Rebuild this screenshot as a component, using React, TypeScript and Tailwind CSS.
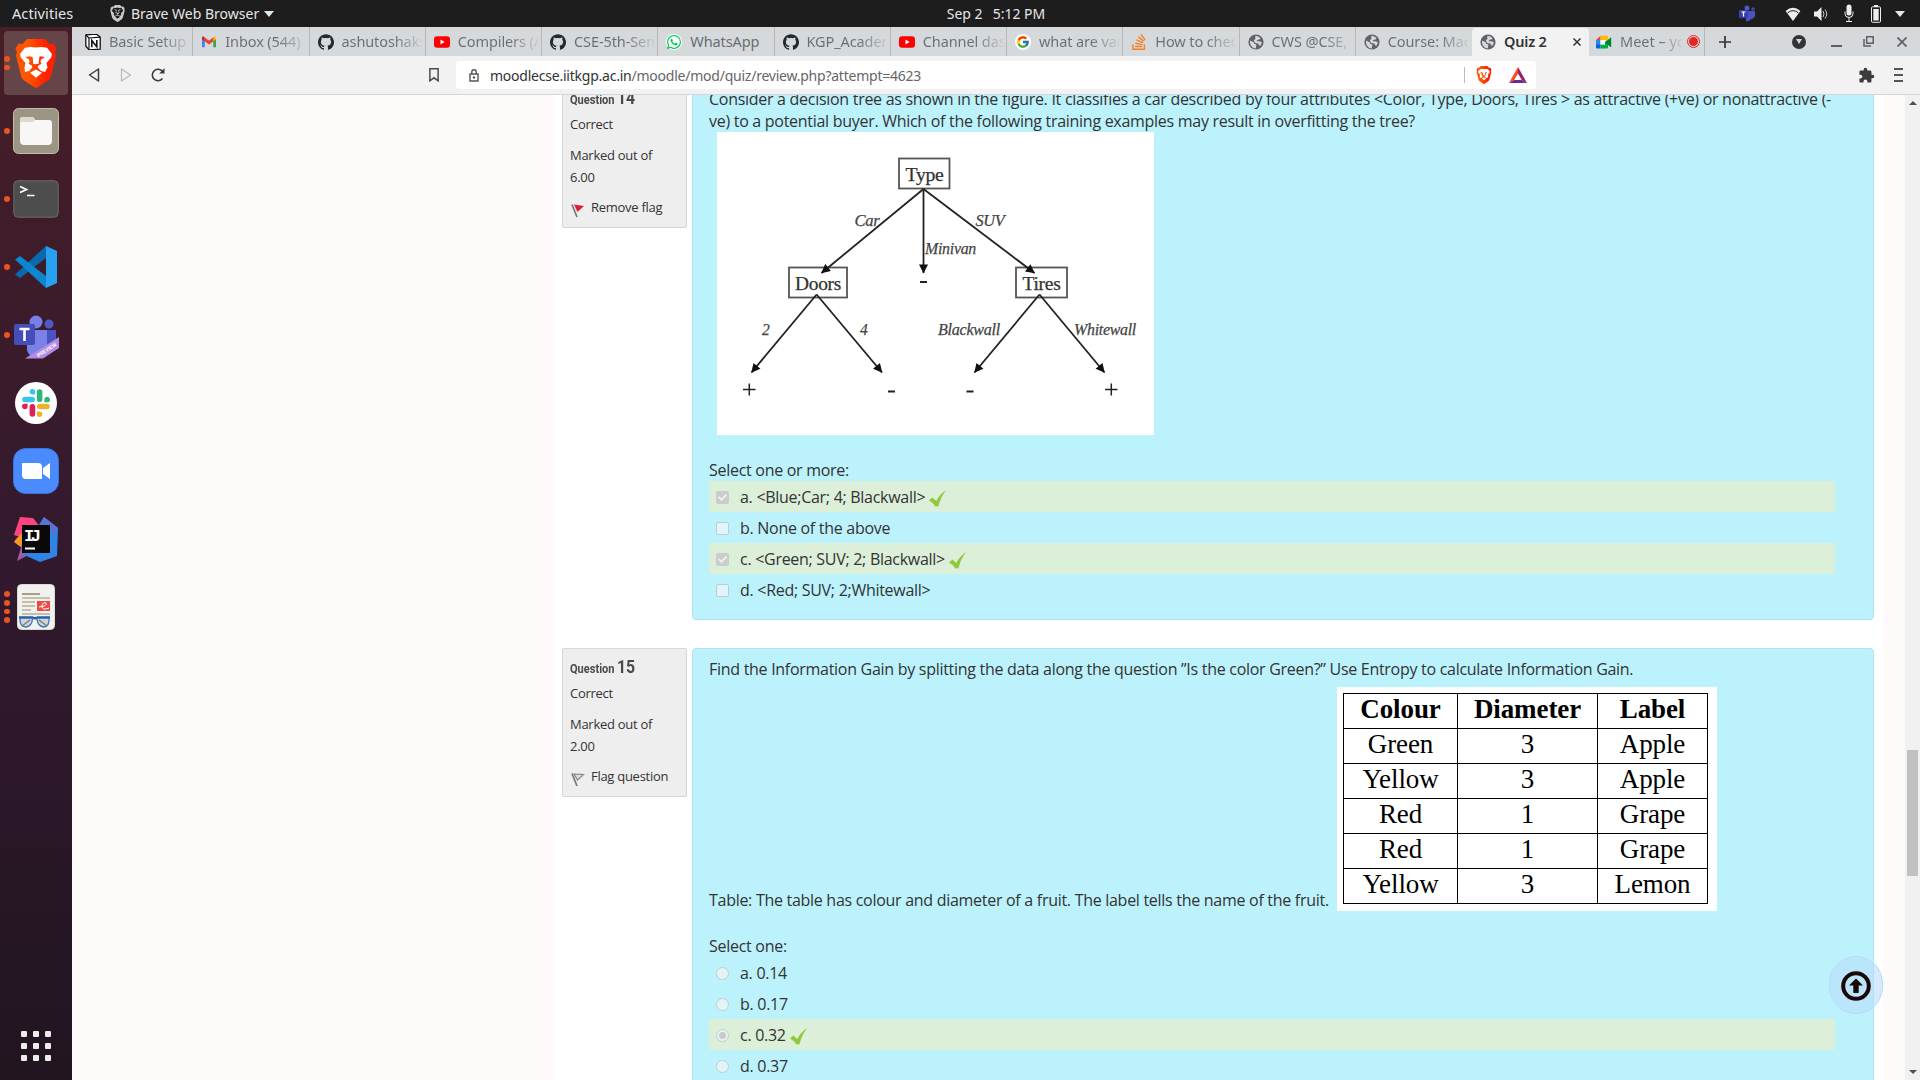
import React from "react";
import { SiBrave, SiGithub, SiWhatsapp, SiStackoverflow } from "react-icons/si";
import { FcGoogle } from "react-icons/fc";
import { FaCheck } from "react-icons/fa";
import { MdExtension } from "react-icons/md";

const ui = "font-['Noto_Sans',sans-serif]";

function NotionIcon() {
  return (
    <svg viewBox="0 0 16 16" className="size-4">
      <path d="M.8.8 11.5.2 15.2 3v12.2L4 15.8.8 12z" fill="#fff" stroke="#111" strokeWidth="1.3" strokeLinejoin="round" />
      <path d="M1 1l3 3v11.5M4 4l11-.8" stroke="#111" strokeWidth="1.2" fill="none" />
      <path d="M6.800 13.200V6.600l5 6.200V6" stroke="#111" strokeWidth="1.600" fill="none" />
    </svg>
  );
}

function GmailIcon() {
  return (
    <svg viewBox="0 0 16 16" className="size-4">
      <path d="M1 4v9.2h2.8V7z" fill="#4285f4" />
      <path d="M12.2 7v6.2H15V4z" fill="#34a853" />
      <path d="M12.2 4v3.4L15 5.2V3.6c0-1-1.2-1.6-2-.9z" fill="#fbbc04" />
      <path d="M1 3.6v1.6l2.8 2.2V4L3 2.7c-.8-.7-2-.1-2 .9z" fill="#c5221f" />
      <path d="M3.5 3.2 8 6.6l4.5-3.4v4L8 10.6 3.5 7.2z" fill="#ea4335" />
    </svg>
  );
}

function YoutubeIcon() {
  return (
    <svg viewBox="0 0 16 16" className="size-4">
      <rect x="0" y="2.3" width="16" height="11.4" rx="3" fill="#f00" />
      <path d="M6.5 5.6v4.8L10.6 8z" fill="#fff" />
    </svg>
  );
}

function GlobeIcon() {
  return (
    <svg viewBox="0 0 16 16" className="size-4">
      <circle cx="8" cy="8" r="7.6" fill="#5f6368" />
      <path d="M2.2 6.5 6 8.400l.2 1.400 2.200.8-.6 3.800C4.600 14.400 2 11.600 2 8z" fill="#d5d9dc" />
      <path d="M7 2.200 9.200 2l3.300 2-.9 1.600-2 .2L8.500 7.200H12l2 1.600-2 3.400-1.800-2.600-3-.6L5.800 6.400l1.800-2z" fill="#d5d9dc" />
    </svg>
  );
}

function MeetIcon() {
  return (
    <svg viewBox="0 0 16 16" className="size-4">
      <path d="M0 6h4.500v5H0z" fill="#2684fc" />
      <path d="M0 6 4.500 1.800V6z" fill="#ea4335" />
      <path d="M4.500 1.800H11q1 0 1 1V6H4.500z" fill="#ffba00" />
      <path d="M0 10.500h4.500v4H1.200Q0 14.500 0 13.300z" fill="#0066da" />
      <path d="M4.500 10.500H9V8l3-2v7.500q0 1-1 1H4.500z" fill="#00ac47" />
      <path d="M4.500 6H9v4.500H4.500z" fill="#fff" />
      <path d="M9 8.200 15.200 3.200v10.300L12 11z" fill="#00832d" />
    </svg>
  );
}

const tabs: { icon: React.ReactNode; label: string; whole?: boolean }[] = [
  { icon: <NotionIcon />, label: "Basic Setup" },
  { icon: <GmailIcon />, label: "Inbox (544) - a" },
  { icon: <SiGithub className="size-4 text-[#24292e]" />, label: "ashutoshakshat" },
  { icon: <YoutubeIcon />, label: "Compilers (Au" },
  { icon: <SiGithub className="size-4 text-[#24292e]" />, label: "CSE-5th-Sem-" },
  { icon: <span className="flex size-4 items-center justify-center rounded-full bg-white"><SiWhatsapp className="size-3.5 text-[#00c853]" /></span>, label: "WhatsApp", whole: true },
  { icon: <SiGithub className="size-4 text-[#24292e]" />, label: "KGP_Academic" },
  { icon: <YoutubeIcon />, label: "Channel dash" },
  { icon: <span className="flex size-4 items-center justify-center rounded-full bg-white"><FcGoogle className="size-3.5" /></span>, label: "what are vario" },
  { icon: <SiStackoverflow className="size-4 text-[#f48024]" />, label: "How to check" },
  { icon: <GlobeIcon />, label: "CWS @CSE, IIT" },
  { icon: <GlobeIcon />, label: "Course: Machi" },
];

function TopBar() {
  return (
    <header className={`grid h-[27px] shrink-0 grid-cols-3 items-center bg-[#1d1d1d] text-[14px] text-[#e6e6e6] ${ui}`}>
      <div className="flex items-center pl-3">
        <span className="w-[62px] whitespace-nowrap text-[14.500px] tracking-[.1px]">Activities</span>
        <span className="ml-9 flex h-[19px] w-[14px] items-center justify-center">
          <SiBrave className="size-[17px] shrink-0 text-[#c9c9c9]" />
        </span>
        <span className="ml-[7px] w-[127px] whitespace-nowrap">Brave Web Browser</span>
        <span className="ml-[6px] border-x-[5px] border-t-[6px] border-x-transparent border-t-[#e6e6e6]" />
      </div>
      <div className="flex justify-center gap-[10px] pl-[72px]">
        <span>Sep 2</span>
        <span>5:12 PM</span>
      </div>
      <div className="flex items-center justify-end pr-[15px]">
        <svg viewBox="0 0 17 17" className="mr-[29px] size-[17px]">
          <circle cx="8" cy="3" r="2.500" fill="#5059c9" /><circle cx="14" cy="4" r="1.800" fill="#4048b0" />
          <path d="M7 6h9v5q-1 3-4 3-2 3-5 2z" fill="#4a52bd" />
          <rect x="0" y="5" width="9" height="8" rx="1" fill="#3940ab" />
          <path d="M2.500 7h4M4.500 7v4.500" stroke="#fff" strokeWidth="1.200" />
        </svg>
        <svg viewBox="0 0 16 16" className="mr-3 size-4">
          <path d="M8 15 .6 5Q8-1.500 15.400 5z" fill="#eee" /><path d="M2.600 6.800Q8 2.500 13.400 6.800" stroke="#1d1d1d" fill="none" />
        </svg>
        <svg viewBox="0 0 16 16" className="mr-3 size-4">
          <path d="M1 5.500h3L8.500 1v14L4 10.500H1z" fill="#eee" /><path d="M10 5q2 3 0 6M12 3.500q3.500 4.500 0 9" stroke="#ccc" fill="none" />
        </svg>
        <svg viewBox="0 0 16 18" className="mr-[13px] h-[19px] w-4">
          <rect x="5.500" y="0" width="5" height="11" rx="2.500" fill="#eee" /><path d="M4 7v2q0 4 4 4t4-4V7M8 13v4M5 17h6" stroke="#eee" fill="none" />
        </svg>
        <svg viewBox="0 0 12 18" className="mr-[13px] h-[18px] w-3">
          <rect x="1.500" y="1.800" width="9" height="15.500" rx="1" stroke="#eee" fill="none" /><rect x="4" y="0" width="4" height="2" fill="#eee" /><rect x="3.300" y="4" width="5.400" height="11.500" fill="#eee" />
        </svg>
        <span className="border-x-[5px] border-t-[6px] border-x-transparent border-t-[#e6e6e6]" />
      </div>
    </header>
  );
}

function DockItem({ dots, active, children }: { dots: number; active?: boolean; children: React.ReactNode }) {
  return (
    <div className="flex h-[68px] items-center">
      <div className={`relative mx-1 flex size-16 items-center justify-center rounded-[4px] ${active ? "bg-[#664549]" : ""}`}>
        <div className="absolute left-0 top-0 flex h-full flex-col justify-center gap-[3px]">
          {Array.from({ length: dots }, (_, i) => (
            <span key={i} className="size-[5.600px] rounded-full bg-[#e95420]" />
          ))}
        </div>
        {children}
      </div>
    </div>
  );
}

function BraveLogo({ className }: { className: string }) {
  return (
    <svg viewBox="0 0 42 49" className={className}>
      <defs>
        <linearGradient id="bl"><stop offset=".3" stopColor="#ff5500" /><stop offset=".75" stopColor="#ff2000" /></linearGradient>
      </defs>
      <path d="M12 0h18l4.500 5 4-.3 3 4.800-1.500 3.500 1 3.500L36 37q-.8 3-3.500 4.800L23 48q-2 1.500-4 0L9.500 41.800Q6.800 40 6 37L1 16.500 2 13 .5 9.500l3-4.800 4 .3z" fill="url(#bl)" />
      <path d="M21 8.500 26.500 8l5.500.8L37 15l-.8 3.500-4.700 5.500 1 4.500-2.500 4.500-4-1-3.300-3.500.3-1.800 3.500-2-1-1.700.5-2.500 4-2.500-5-.8-3.500 1.300.5 5.500-2 1.500-2-1.500.5-5.500-3.500-1.300-5 .8 4 2.500.5 2.500-1 1.700 3.500 2 .3 1.800-3.300 3.500-4 1L9.500 28.500l1-4.500-4.700-5.500L5 15l5-6.200 5.500-.8z" fill="#fff" />
      <path d="M17 13l4-1 4 1-1.500 12h-5z" fill="#fff" />
      <path d="M21 30.500l6 3.300-6 5-6-5z" fill="#fff" />
    </svg>
  );
}

function Dock() {
  return (
    <aside className="flex w-[72px] shrink-0 flex-col bg-linear-to-b from-[#471e27] via-[#33192e] to-[#211520] pt-[2px]">
      <DockItem dots={2} active><BraveLogo className="h-[49px] w-[42px]" /></DockItem>
      <DockItem dots={1}>
        <svg viewBox="0 0 46 46" className="size-[46px]">
          <rect x=".5" y=".5" width="45" height="45" rx="5" fill="#9d9583" stroke="#c2bca9" />
          <path d="M7 12q0-3 3-3h8q3 0 4 3h14q3 0 3 3v18q0 4-4 4H11q-4 0-4-4z" fill="#f8f7f5" />
          <path d="M7 16v-4q0-3 3-3h8q3 0 4 3-1 2-3 2H9q-2 0-2 2z" fill="#dedacb" />
        </svg>
      </DockItem>
      <DockItem dots={1}>
        <svg viewBox="0 0 46 38" className="h-[38px] w-[46px]">
          <rect x=".8" y=".8" width="44.400" height="36.400" rx="4" fill="#4d4d4d" stroke="#6c6c6c" />
          <path d="M7 6.500l6.500 3L7 12.500M14 15.500h7.500" stroke="#fff" strokeWidth="1.700" fill="none" />
        </svg>
      </DockItem>
      <DockItem dots={1}>
        <svg viewBox="0 0 42 42" className="size-[42px]">
          <path d="M0 28.500 31 0v12L5 32z" fill="#0a69ad" />
          <path d="M0 13.500 5 10l26 20v12z" fill="#0c86ce" />
          <path d="M31 0l11 5v32l-11 5z" fill="#27a2f0" />
        </svg>
      </DockItem>
      <DockItem dots={1}>
        <svg viewBox="0 0 46 44" className="mt-1 h-11 w-[46px]">
          <circle cx="23" cy="7" r="6.500" fill="#7880e8" /><circle cx="36" cy="9" r="4.500" fill="#4f58c9" />
          <path d="M14 15h29v12q-1 9-10 9-5 7-13 6-5-2-6-7z" fill="#7a82e8" /><path d="M34 15h9v12q-1 8-9 9z" fill="#4a53c4" />
          <rect x="1" y="9" width="21" height="21" rx="2" fill="#454eb8" />
          <path d="M6.500 14h10M11.500 14v12" stroke="#fff" strokeWidth="2.600" />
          <path d="M46 22v11L30 43.500H12z" fill="#b18be6" />
          <text x="25.500" y="42.500" transform="rotate(-33 25.500 42.500)" fontSize="5.500" fontWeight="700" fill="#fff" fontFamily="Liberation Sans" textLength="22" lengthAdjust="spacingAndGlyphs">PREVIEW</text>
        </svg>
      </DockItem>
      <DockItem dots={0}>
        <div className="flex size-[42px] items-center justify-center rounded-full bg-white">
          <svg viewBox="0 0 28 28" className="size-7">
            <g strokeWidth="5.600" strokeLinecap="round">
              <path d="M3 10.500h7.200" stroke="#36c5f0" /><path d="M17.600 3v7.200" stroke="#2eb67d" />
              <path d="M17.800 17.500H25" stroke="#ecb22e" /><path d="M10.400 17.800V25" stroke="#e01e5a" />
            </g>
            <path d="M13.200 5.600V3a2.800 2.800 0 1 0-2.800 2.600z" fill="#36c5f0" />
            <path d="M22.400 13.300H25a2.800 2.800 0 1 0-2.600-2.800z" fill="#2eb67d" />
            <path d="M14.800 22.400V25a2.800 2.800 0 1 0 2.800-2.600z" fill="#ecb22e" />
            <path d="M5.600 14.700H3a2.800 2.800 0 1 0 2.600 2.800z" fill="#e01e5a" />
          </svg>
        </div>
      </DockItem>
      <DockItem dots={0}>
        <svg viewBox="0 0 46 46" className="size-[46px]">
          <rect x=".5" y=".5" width="45" height="45" rx="12" fill="#4a8cff" stroke="#3b73dd" />
          <path d="M9 15h16q4 0 4 4v12H13q-4 0-4-4zM30 20l7-5v16l-7-5z" fill="#fff" />
        </svg>
      </DockItem>
      <DockItem dots={0}>
        <svg viewBox="0 0 46 46" className="size-[46px]">
          <path d="M7 1l13 1 8 10-12 12-15-5z" fill="#fe4480" /><path d="M3 23l6-6v15l-8-6z" fill="#f6962a" />
          <path d="M9 28l12 8-17 9z" fill="#a159a8" /><path d="M31 1l14 11-1 28-17 6-18-8 15-25z" fill="#2f84e6" />
          <path d="M24 12l7-11 14 11-5 6z" fill="#5a72d2" />
          <rect x="9" y="9" width="28" height="28" fill="#090909" />
          <path d="M12 32.500h10" stroke="#fff" strokeWidth="2" />
          <text x="11" y="25" fontSize="17" fontWeight="700" fill="#fff" fontFamily="Liberation Mono" textLength="17">IJ</text>
        </svg>
      </DockItem>
      <DockItem dots={4}>
        <svg viewBox="0 0 38 46" className="h-[46px] w-[38px]">
          <rect x=".5" y=".5" width="37" height="45" rx="4" fill="#f1f1ee" stroke="#d9d9d6" />
          <path d="M5 10h18" stroke="#a89d85" strokeWidth="2" /><path d="M5 14h28M5 18h13M5 22h13M5 26h9M5 30h28" stroke="#c4bfb0" strokeWidth="2" />
          <rect x="20" y="17" width="13" height="10" fill="#ee4a45" /><path d="M22 23q9-1 7-4-4-1-4 3 0 5 7 2" stroke="#fff" fill="none" />
          <path d="M3 34.500q-.5 8.500 6 8.500 6-1 6.500-8M32 34.500q.5 8.500-5.500 8.500-6-1-6.500-8" fill="#cdd3d8" stroke="#3a76b5" strokeWidth="1.300" />
          <path d="M2 33.500h13.500q2.500 1.500 5 0H33" fill="none" stroke="#2360a8" strokeWidth="2.400" />
          <path d="M5 42l8-6M30 42l-8-6" stroke="#777" strokeWidth="1.200" />
        </svg>
      </DockItem>
      <div className="mb-[19px] ml-[21px] mt-auto grid w-[30px] grid-cols-3 gap-[6px]">
        {Array.from({ length: 9 }, (_, i) => (
          <span key={i} className="size-[6px] rounded-[1px] bg-[#ecece8]" />
        ))}
      </div>
    </aside>
  );
}

const faded = "overflow-hidden whitespace-nowrap bg-linear-to-r from-[#696e72] from-65% to-[#696e72]/10 bg-clip-text text-transparent";

function TabStrip() {
  return (
    <div className={`flex h-[29px] shrink-0 bg-[#d5d9dc] pl-[5px] text-[14.500px] text-[#696e72] ${ui}`}>
      {tabs.map((t, i) => (
        <div key={i} className={`flex w-[116.250px] shrink-0 items-center border-r pl-2 ${i === 11 ? "border-transparent" : "border-[#b4b8bb]"}`}>
          <span className="shrink-0">{t.icon}</span>
          <span className={`ml-2 w-[80px] tracking-[-.1px] ${t.whole ? "whitespace-nowrap" : faded}`}>{t.label}</span>
        </div>
      ))}
      <div className="mt-px flex w-[117px] shrink-0 items-center rounded-t-[4px] bg-[#f2f2f2] pl-2 text-[#333]">
        <GlobeIcon />
        <span className="ml-2 font-semibold tracking-[-.2px]">Quiz 2</span>
        <svg viewBox="0 0 8 8" className="ml-auto mr-2 size-2"><path d="M.5.5l7 7M7.500.5l-7 7" stroke="#333" strokeWidth="1.500" /></svg>
      </div>
      <div className="flex w-[116px] shrink-0 items-center pl-[7px]">
        <MeetIcon />
        <span className={`ml-2 w-[62px] ${faded}`}>Meet – you</span>
        <span className="ml-[5px] flex size-[13px] shrink-0 items-center justify-center rounded-full border border-[#e32525]"><span className="size-[9px] rounded-full bg-[#e32525]" /></span>
        <span className="ml-[4px] h-full w-px bg-[#b4b8bb]" />
      </div>
      <svg viewBox="0 0 12 12" className="ml-[14px] size-3 self-center"><path d="M6 0v12M0 6h12" stroke="#333" strokeWidth="1.700" /></svg>
      <div className="ml-auto flex items-center pr-[13px]">
        <span className="mr-[25px] flex size-[14px] items-center justify-center rounded-full bg-[#333]"><span className="border-x-[3.500px] border-t-[5px] border-x-transparent border-t-[#d5d9dc]" /></span>
        <span className="mr-[21px] mt-2 h-[2px] w-[11px] bg-[#5c6064]" />
        <svg viewBox="0 0 11 11" className="mr-[23px] size-[11px]"><path d="M3.700.700h6.500v6.500H3.700zM1 3v7h7" fill="none" stroke="#5c6064" strokeWidth="1.500" /></svg>
        <svg viewBox="0 0 10 10" className="size-[10px]"><path d="M.5.5l9 9M9.500.5l-9 9" stroke="#5c6064" strokeWidth="1.700" /></svg>
      </div>
    </div>
  );
}

function Toolbar() {
  return (
    <div className={`flex h-[39px] shrink-0 items-center border-b border-[#d3d6d8] bg-[#f2f2f2] ${ui}`}>
      <svg viewBox="0 0 12 14" className="ml-4 h-[14px] w-3"><path d="M10.500 1v12L1.500 7z" fill="none" stroke="#3c3c3c" strokeWidth="1.500" strokeLinejoin="round" /></svg>
      <svg viewBox="0 0 12 14" className="ml-5 h-[14px] w-3"><path d="M1.500 1v12l9-6z" fill="none" stroke="#bbb" strokeWidth="1.300" strokeLinejoin="round" /></svg>
      <svg viewBox="0 0 14 14" className="ml-[19px] size-[14px]"><path d="M11.500 10.500A5.700 5.700 0 1 1 11.500 3.500" fill="none" stroke="#3c3c3c" strokeWidth="1.600" /><path d="M13.500 0v5.500H8.200z" fill="#3c3c3c" /></svg>
      <svg viewBox="0 0 10 14" className="ml-[264px] h-[14px] w-[10px]"><path d="M.9.8h8.200v12L5 9.800.9 12.800z" fill="none" stroke="#4a4a4a" strokeWidth="1.500" /></svg>
      <div className="ml-[17px] flex h-7 w-[1080px] items-center rounded-[4px] bg-white">
        <svg viewBox="0 0 10 13" className="ml-[13px] h-[13px] w-[10px]"><path d="M1 5h8v7H1zM2.800 5V3q0-2.200 2.200-2.200T7.200 3v2" fill="none" stroke="#555" strokeWidth="1.400" /><circle cx="5" cy="8.500" r="1.200" fill="#555" /></svg>
        <span className="ml-[11px] whitespace-nowrap text-[14px] tracking-[-.23px] text-[#666]"><span className="text-[#333]">moodlecse.iitkgp.ac.in</span>/moodle/mod/quiz/review.php?attempt=4623</span>
        <span className="ml-auto mr-[11px] h-4 w-px bg-[#bbb]" />
        <BraveLogo className="h-[18px] w-4" />
        <svg viewBox="0 0 18 16" className="ml-[17px] mr-[9px] h-4 w-[18px]"><path d="M9 0 0 16l5.200-3L9 6.500z" fill="#ff4724" /><path d="M9 0l9 16-5.200-3L9 6.500z" fill="#9e1f63" /><path d="M0 16h18l-5.200-3H5.200z" fill="#662d91" /></svg>
      </div>
      <MdExtension className="ml-auto mr-[19px] size-[17px] text-[#3c3c3c]" />
      <div className="mr-[17px] flex w-[9px] flex-col gap-1"><i className="h-[1.800px] bg-[#555]" /><i className="h-[1.800px] bg-[#555]" /><i className="h-[1.800px] bg-[#555]" /></div>
    </div>
  );
}

function InfoBox({ no, marks, flagged }: { no: string; marks: string; flagged?: boolean }) {
  return (
    <div className="h-[149px] w-[125px] shrink-0 rounded-[2px] border border-[#d6d6d6] bg-[#eee] pl-[7px] pt-[5px] text-[13px] leading-[22px] tracking-[-.28px] text-[#333]">
      <h3 className="flex h-[26px] items-baseline gap-1 font-['Roboto',sans-serif] font-bold tracking-normal text-[#4a4a4a]">
        <span className="w-[43px] origin-left scale-x-[.850] whitespace-nowrap text-[13px]">Question</span>
        <span className="origin-left scale-x-[.88] text-[18px] leading-[26px]">{no}</span>
      </h3>
      <div className="mt-[2px]">Correct</div>
      <div className="mt-[9px] w-[100px]">Marked out of {marks}</div>
      <div className="mt-[8px] flex items-center">
        <svg viewBox="0 0 14 15" className="ml-[1px] mr-[6px] mt-[6px] h-[15px] w-[14px]">
          <path d="M1 1.500 6 14" stroke="#777" strokeWidth="1.700" />
          {flagged ? <path d="M3 1.500 13 3 6.500 9z" fill="#dc1f3c" /> : <path d="M3 2l9.500.6L6.500 8z" fill="#ddd" stroke="#888" strokeWidth="1.200" />}
        </svg>
        {flagged ? "Remove flag" : "Flag question"}
      </div>
    </div>
  );
}

function Option({ text, kind, checked }: { text: string; kind: "check" | "radio"; checked?: boolean }) {
  return (
    <div className={`flex h-[31px] w-[1126px] items-center pl-[7px] ${checked ? "bg-[#dcefd9]" : ""}`}>
      {kind === "check" ? (
        <span className={`mt-[2px] flex size-[13px] items-center justify-center rounded-[2px] ${checked ? "bg-[#cacdc9]" : "border border-[#bccdd3] bg-[#e2f3f9]"}`}>
          {checked && <FaCheck className="size-[9px] text-[#eff2ee]" />}
        </span>
      ) : (
        <span className="mt-[2px] flex size-[13px] items-center justify-center rounded-full border border-[#c3cfd0] bg-[#e6f3f6]">
          {checked && <span className="size-[7px] rounded-full bg-[#c5cbc4]" />}
        </span>
      )}
      <span className="ml-[11px] whitespace-pre">{text}</span>
      {checked && (
        <svg viewBox="0 0 18 17" className="ml-1 mt-[4px] h-[17px] w-[18px]"><path d="M0 10.500 3.300 7.500 7.300 11Q10.500 4.500 17 0 11.500 7.500 9.500 16.300L6.500 16.600Q4 12.500 0 10.500z" fill="#91c93c" /></svg>
      )}
    </div>
  );
}

function Tree() {
  return (
    <svg viewBox="0 0 437 303" className="ml-2 block h-[303px] w-[437px] bg-white" fontFamily="Liberation Serif">
      <defs>
        <marker id="arrow" viewBox="0 0 10 10" refX="9.500" refY="5" markerWidth="10" markerHeight="9" markerUnits="userSpaceOnUse" orient="auto"><path d="M0 0 10 5 0 10z" fill="#111" /></marker>
      </defs>
      <g fill="none" stroke="#555" strokeWidth="1.800">
        <rect x="182" y="26.500" width="50.500" height="30" /><rect x="72" y="135.500" width="58" height="30" /><rect x="299" y="135.500" width="51" height="30" />
      </g>
      <g stroke="#222" strokeWidth="1.800">
        {["M206.500 57 104.500 141", "M206.500 57V141", "M206.500 57 317.500 141", "M99.600 162.500 34.500 240.500", "M99.600 162.500 165 240.500", "M322.500 162.500 257.500 240.500", "M322.500 162.500 387.500 240.500"].map((d) => (
          <path key={d} d={d} markerEnd="url(#arrow)" />
        ))}
      </g>
      <g fontSize="19" fill="#333" stroke="#333" strokeWidth=".25">
        <text x="188.500" y="48.500" textLength="38" lengthAdjust="spacingAndGlyphs">Type</text>
        <text x="78" y="157.500" textLength="46" lengthAdjust="spacingAndGlyphs">Doors</text>
        <text x="305.500" y="157.500" textLength="38" lengthAdjust="spacingAndGlyphs">Tires</text>
      </g>
      <g fontSize="16.500" fontStyle="italic" fill="#444" stroke="#444" strokeWidth=".25">
        <text x="137.500" y="93.500" textLength="25" lengthAdjust="spacingAndGlyphs">Car</text>
        <text x="258.500" y="93.500" textLength="29" lengthAdjust="spacingAndGlyphs">SUV</text>
        <text x="208" y="121.500" textLength="51" lengthAdjust="spacingAndGlyphs">Minivan</text>
        <text x="45" y="203" textLength="7.500" lengthAdjust="spacingAndGlyphs">2</text>
        <text x="143" y="203" textLength="7.500" lengthAdjust="spacingAndGlyphs">4</text>
        <text x="221" y="203" textLength="62" lengthAdjust="spacingAndGlyphs">Blackwall</text>
        <text x="357" y="203" textLength="62" lengthAdjust="spacingAndGlyphs">Whitewall</text>
      </g>
      <path d="M26 257.500h12.500M32.300 251.500v12M388 257.500h12.500M394.300 251.500v12" stroke="#222" strokeWidth="1.500" />
      <path d="M203 150h7M171 259.500h7M249.500 259.500h7" stroke="#222" strokeWidth="2.200" />
    </svg>
  );
}

const rows = [["Green", "3", "Apple"], ["Yellow", "3", "Apple"], ["Red", "1", "Grape"], ["Red", "1", "Grape"], ["Yellow", "3", "Lemon"]];

function FruitTable() {
  return (
    <div className="ml-2 h-[224px] w-[380px] shrink-0 bg-white pl-[6px] pt-[6px] font-['Liberation_Serif',serif] text-[27px] leading-[31px] tracking-[-.1px] text-black">
      <table className="h-[210px] w-[364px] table-fixed border-collapse text-center">
        <colgroup><col className="w-[114px]" /><col className="w-[140px]" /><col className="w-[110px]" /></colgroup>
        <thead><tr>{["Colour", "Diameter", "Label"].map((h) => <th key={h} className="border border-black p-0 pb-[3px] font-bold">{h}</th>)}</tr></thead>
        <tbody>{rows.map((r, i) => <tr key={i}>{r.map((c, j) => <td key={j} className="border border-black p-0 pb-[3px]">{c}</td>)}</tr>)}</tbody>
      </table>
    </div>
  );
}

const blueBox = "w-[1182px] rounded-[4px] border border-[#abe5ef] bg-[#bcf2fc] pl-4";

export default function App() {
  return (
    <div className="flex h-[1080px] w-[1920px] flex-col overflow-hidden">
      <TopBar />
      <div className="flex min-h-0 flex-1">
        <Dock />
        <div className="flex min-w-0 flex-1 flex-col">
          <TabStrip />
          <Toolbar />
          <div className="relative flex min-h-0 flex-1 bg-[#fffafa]">
            <main className="ml-[481px] w-[1330px] overflow-hidden bg-white pl-[9px] font-['Open_Sans',sans-serif] text-[16px] leading-[22px] tracking-[-.285px] text-[#333]">
              <section className="-mt-4 flex gap-[5px]">
                <InfoBox no="14" marks="6.00" flagged />
                <div className={`h-[541px] pt-2 ${blueBox}`}>
                  <p className="whitespace-nowrap">Consider a decision tree as shown in the figure. It classifies a car described by four attributes &lt;Color, Type, Doors, Tires &gt; as attractive (+ve) or nonattractive (-<br />ve) to a potential buyer. Which of the following training examples may result in overfitting the tree?</p>
                  <Tree />
                  <div className="mt-6">Select one or more:</div>
                  <Option kind="check" text="a. <Blue;Car; 4; Blackwall>" checked />
                  <Option kind="check" text="b. None of the above" />
                  <Option kind="check" text="c. <Green; SUV; 2; Blackwall>" checked />
                  <Option kind="check" text="d. <Red; SUV; 2;Whitewall>" />
                </div>
              </section>
              <section className="mt-7 flex gap-[5px]">
                <InfoBox no="15" marks="2.00" />
                <div className={`h-[541px] pt-[9px] ${blueBox}`}>
                  <p>Find the Information Gain by splitting the data along the question ”Is the color Green?” Use Entropy to calculate Information Gain.</p>
                  <div className="mt-[7px] flex items-end">
                    <span className="w-[620px] shrink-0 whitespace-nowrap">Table: The table has colour and diameter of a fruit. The label tells the name of the fruit.</span>
                    <FruitTable />
                  </div>
                  <div className="mt-6">Select one:</div>
                  <Option kind="radio" text="a. 0.14" />
                  <Option kind="radio" text="b. 0.17" />
                  <Option kind="radio" text="c. 0.32" checked />
                  <Option kind="radio" text="d. 0.37" />
                </div>
              </section>
            </main>
            <div className="ml-auto flex w-[15px] flex-col items-center justify-between bg-[#f1f1f1]">
              <span className="mt-[6px] border-x-[4px] border-b-[4px] border-x-transparent border-b-[#505050]" />
              <span className="mb-[6px] border-x-[4px] border-t-[4px] border-x-transparent border-t-[#505050]" />
            </div>
            <div className="absolute right-[2px] top-[655px] h-[126px] w-[11px] bg-[#c1c1c1]" />
            <div className="absolute right-[37px] top-[861px] flex h-[58px] w-[54px] items-center justify-center rounded-full border border-[#b3dcfb] bg-[#badcfa]/60">
              <svg viewBox="0 0 30 30" className="mt-[2px] size-[30px]"><circle cx="15" cy="15" r="12.800" fill="none" stroke="#1a0808" strokeWidth="4" /><path d="M15 7.500 22 14.500h-4.300V22h-5.400v-7.500H8z" fill="#1a0808" /></svg>
            </div>
          </div>
        </div>
      </div>
    </div>
  );
}
